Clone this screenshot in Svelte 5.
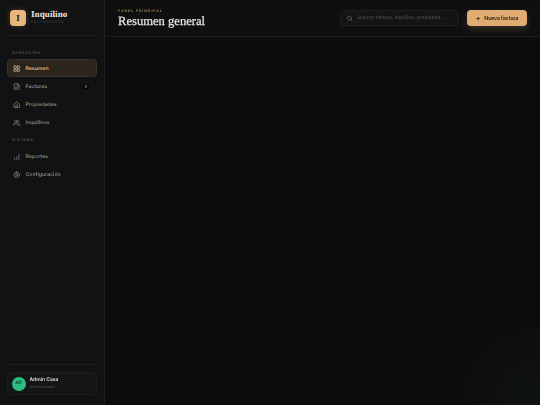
<script lang="ts">
  const operacion = [
    { label: 'Resumen', icon: 'grid', active: true },
    { label: 'Facturas', icon: 'file', badge: '8' },
    { label: 'Propiedades', icon: 'home' },
    { label: 'Inquilinos', icon: 'users' }
  ];
  const sistema = [
    { label: 'Reportes', icon: 'chart' },
    { label: 'Configuración', icon: 'gear' }
  ];
  const groups = [
    { title: 'OPERACIÓN', items: operacion },
    { title: 'SISTEMA', items: sistema }
  ];
</script>

{#snippet icon(name)}
  <svg class="icon" viewBox="0 0 24 24" fill="none" stroke="currentColor" stroke-width="2" stroke-linecap="round" stroke-linejoin="round">
    {#if name === 'grid'}
      <rect x="3" y="3" width="7.5" height="7.5" rx="1" /><rect x="13.5" y="3" width="7.5" height="7.5" rx="1" />
      <rect x="3" y="13.5" width="7.5" height="7.5" rx="1" /><rect x="13.5" y="13.5" width="7.5" height="7.5" rx="1" />
    {:else if name === 'file'}
      <path d="M14 2H6a2 2 0 0 0-2 2v16a2 2 0 0 0 2 2h12a2 2 0 0 0 2-2V8z" /><path d="M14 2v6h6M8 13h8M8 17h5" />
    {:else if name === 'home'}
      <path d="M3 10.5 12 3l9 7.5V20a1 1 0 0 1-1 1H4a1 1 0 0 1-1-1z" /><path d="M9 21v-8h6v8" />
    {:else if name === 'users'}
      <circle cx="9" cy="8" r="4" /><path d="M2 21v-1a6 6 0 0 1 6-6h2a6 6 0 0 1 6 6v1" /><path d="M16 4.2a4 4 0 0 1 0 7.6M19 14.5a6 6 0 0 1 3 5.5v1" />
    {:else if name === 'chart'}
      <path d="M5 21v-4M12 21V12M19 21V5" />
    {:else if name === 'gear'}
      <circle cx="12" cy="12" r="3.2" />
      <path d="M12 2.5l2 2.6 3.2-.6 1 3.2 3 1.3-1 3 1 3-3 1.3-1 3.2-3.2-.6-2 2.6-2-2.6-3.2.6-1-3.2-3-1.3 1-3-1-3 3-1.3 1-3.2 3.2.6z" />
    {/if}
  </svg>
{/snippet}

<div class="shell">
  <aside class="sidebar">
    <div class="brand">
      <div class="logo">I</div>
      <div class="brand-text">
        <div class="brand-name">Inquilino</div>
        <div class="brand-sub">FACTURACIÓN</div>
      </div>
    </div>

    <nav class="nav">
      {#each groups as group}
        <div class="section-title">{group.title}</div>
        {#each group.items as item}
          <a class="nav-item" class:active={item.active} href="#top">
            {@render icon(item.icon)}
            <span class="nav-label">{item.label}</span>
            {#if item.badge}
              <span class="badge">{item.badge}</span>
            {/if}
          </a>
        {/each}
      {/each}
    </nav>

    <div class="user-wrap">
      <div class="user">
        <div class="avatar">AC</div>
        <div>
          <div class="user-name">Admin Casa</div>
          <div class="user-role">Administrador</div>
        </div>
      </div>
    </div>
  </aside>

  <main class="main">
    <header class="topbar">
      <div class="titles">
        <div class="eyebrow">PANEL PRINCIPAL</div>
        <h1>Resumen general</h1>
      </div>
      <div class="actions">
        <div class="search">
          <svg class="search-icon" viewBox="0 0 24 24" fill="none" stroke="currentColor" stroke-width="2" stroke-linecap="round">
            <circle cx="11" cy="11" r="7" /><path d="m20 20-4-4" />
          </svg>
          <span>Buscar factura, inquilino, propiedad...</span>
        </div>
        <button class="primary"><span class="plus">+</span>Nueva factura</button>
      </div>
    </header>
    <div class="content"></div>
  </main>
</div>

<style>
  :global(body) {
    margin: 0;
    background: #0b0c0d;
  }

  .shell {
    display: flex;
    width: 540px;
    height: 405px;
    overflow: hidden;
    font-family: Inter, "Noto Sans", sans-serif;
    color: #d8d5cf;
    text-rendering: geometricPrecision;
    filter: blur(0.25px);
  }

  .sidebar {
    width: 105px;
    flex-shrink: 0;
    display: flex;
    flex-direction: column;
    box-sizing: border-box;
    background: #111213;
    border-right: 1px solid #1d1e20;
  }

  .brand {
    display: flex;
    align-items: center;
    gap: 5px;
    margin: 0 7px;
    padding: 0 3px;
    height: 36px;
    box-sizing: border-box;
    border-bottom: 1px solid #1d1e20;
  }

  .logo {
    width: 16px;
    height: 16px;
    border-radius: 4px;
    background: #e8b57c;
    box-shadow: 0 0 6px rgba(232, 181, 124, 0.25);
    color: #1a130b;
    font: 700 9px/16px "Liberation Serif", serif;
    text-align: center;
  }

  .brand-name {
    font: 700 9px/9px "Liberation Serif", serif;
    color: #eee9e1;
    letter-spacing: 0.1px;
  }

  .brand-sub {
    font-size: 3.5px;
    line-height: 6px;
    letter-spacing: 0.75px;
    color: #4c4c4c;
  }

  .nav {
    flex: 1;
    padding: 0 7px;
  }

  .section-title {
    font-size: 3.6px;
    line-height: 6px;
    letter-spacing: 0.8px;
    color: #5a5954;
    padding: 14px 5px 3px;
    font-weight: 600;
  }

  .nav-item + .section-title {
    padding-top: 6px;
    padding-bottom: 4px;
  }

  .nav-item {
    display: flex;
    align-items: center;
    gap: 5px;
    height: 18px;
    box-sizing: border-box;
    padding: 1px 5px 0;
    border: 1px solid transparent;
    border-radius: 4px;
    color: #96948e;
    font-size: 5.2px;
    font-weight: 500;
    text-decoration: none;
  }

  .nav-item.active {
    background: #2b251c;
    border-color: #3b3226;
    color: #e8c49a;
  }

  .nav-label {
    flex: 1;
  }

  .icon {
    width: 7.5px;
    height: 7.5px;
    flex-shrink: 0;
  }

  .badge {
    width: 10px;
    height: 8px;
    border-radius: 4px;
    background: #08090a;
    border: 1px solid #17181a;
    box-sizing: border-box;
    color: #a3a19b;
    font-size: 3.6px;
    line-height: 6px;
    text-align: center;
  }

  .user-wrap {
    margin: 0 7px;
    padding: 7px 0 10px;
    border-top: 1px solid #1d1e20;
  }

  .user {
    display: flex;
    align-items: center;
    gap: 4px;
    height: 23px;
    box-sizing: border-box;
    padding: 0 3.5px;
    background: #141516;
    border: 1px solid #1c1d1f;
    border-radius: 4px;
  }

  .avatar {
    width: 14px;
    height: 14px;
    border-radius: 50%;
    background: #2dbd84;
    color: #0d3a29;
    font-size: 4.6px;
    font-weight: 700;
    line-height: 14px;
    text-align: center;
  }

  .user-name {
    font-size: 5px;
    line-height: 7px;
    font-weight: 600;
    color: #e2dfd9;
  }

  .user-role {
    font-size: 3.9px;
    line-height: 6px;
    color: #4c4c4c;
  }

  .main {
    flex: 1;
    min-width: 0;
    display: flex;
    flex-direction: column;
  }

  .topbar {
    height: 37px;
    box-sizing: border-box;
    display: flex;
    align-items: center;
    justify-content: space-between;
    padding: 0 13px;
    background: #0e0f10;
    border-bottom: 1px solid #1b1c1e;
  }

  .titles {
    margin-top: 1px;
  }

  .eyebrow {
    font-size: 3.6px;
    line-height: 5px;
    letter-spacing: 0.9px;
    font-weight: 600;
    color: #a98a5f;
  }

  h1 {
    margin: 0;
    font: 400 12.6px/15px "Liberation Serif", serif;
    color: #e8e4dd;
    -webkit-text-stroke: 0.25px #e8e4dd;
  }

  .actions {
    display: flex;
    align-items: center;
    gap: 8px;
  }

  .search {
    display: flex;
    align-items: center;
    gap: 5px;
    width: 119px;
    height: 16px;
    box-sizing: border-box;
    padding: 0 5px;
    background: #131415;
    border: 1px solid #1e1f21;
    border-radius: 4px;
    color: #55544f;
    font-size: 4.9px;
    white-space: nowrap;
  }

  .search-icon {
    width: 7px;
    height: 7px;
    flex-shrink: 0;
    color: #77767a;
  }

  .primary {
    width: 60px;
    height: 16px;
    padding: 0;
    border: none;
    border-radius: 4px;
    background: #e0ac72;
    box-shadow: 0 3px 7px rgba(226, 174, 116, 0.2);
    color: #20170d;
    font-family: inherit;
    font-size: 5px;
    font-weight: 600;
    display: flex;
    align-items: center;
    justify-content: center;
    gap: 4px;
  }

  .plus {
    font-size: 7px;
  }

  .content {
    flex: 1;
    background:
      radial-gradient(circle at 100% 100%, #101314 0, rgba(16, 19, 20, 0) 90px),
      #0b0c0d;
  }
</style>
